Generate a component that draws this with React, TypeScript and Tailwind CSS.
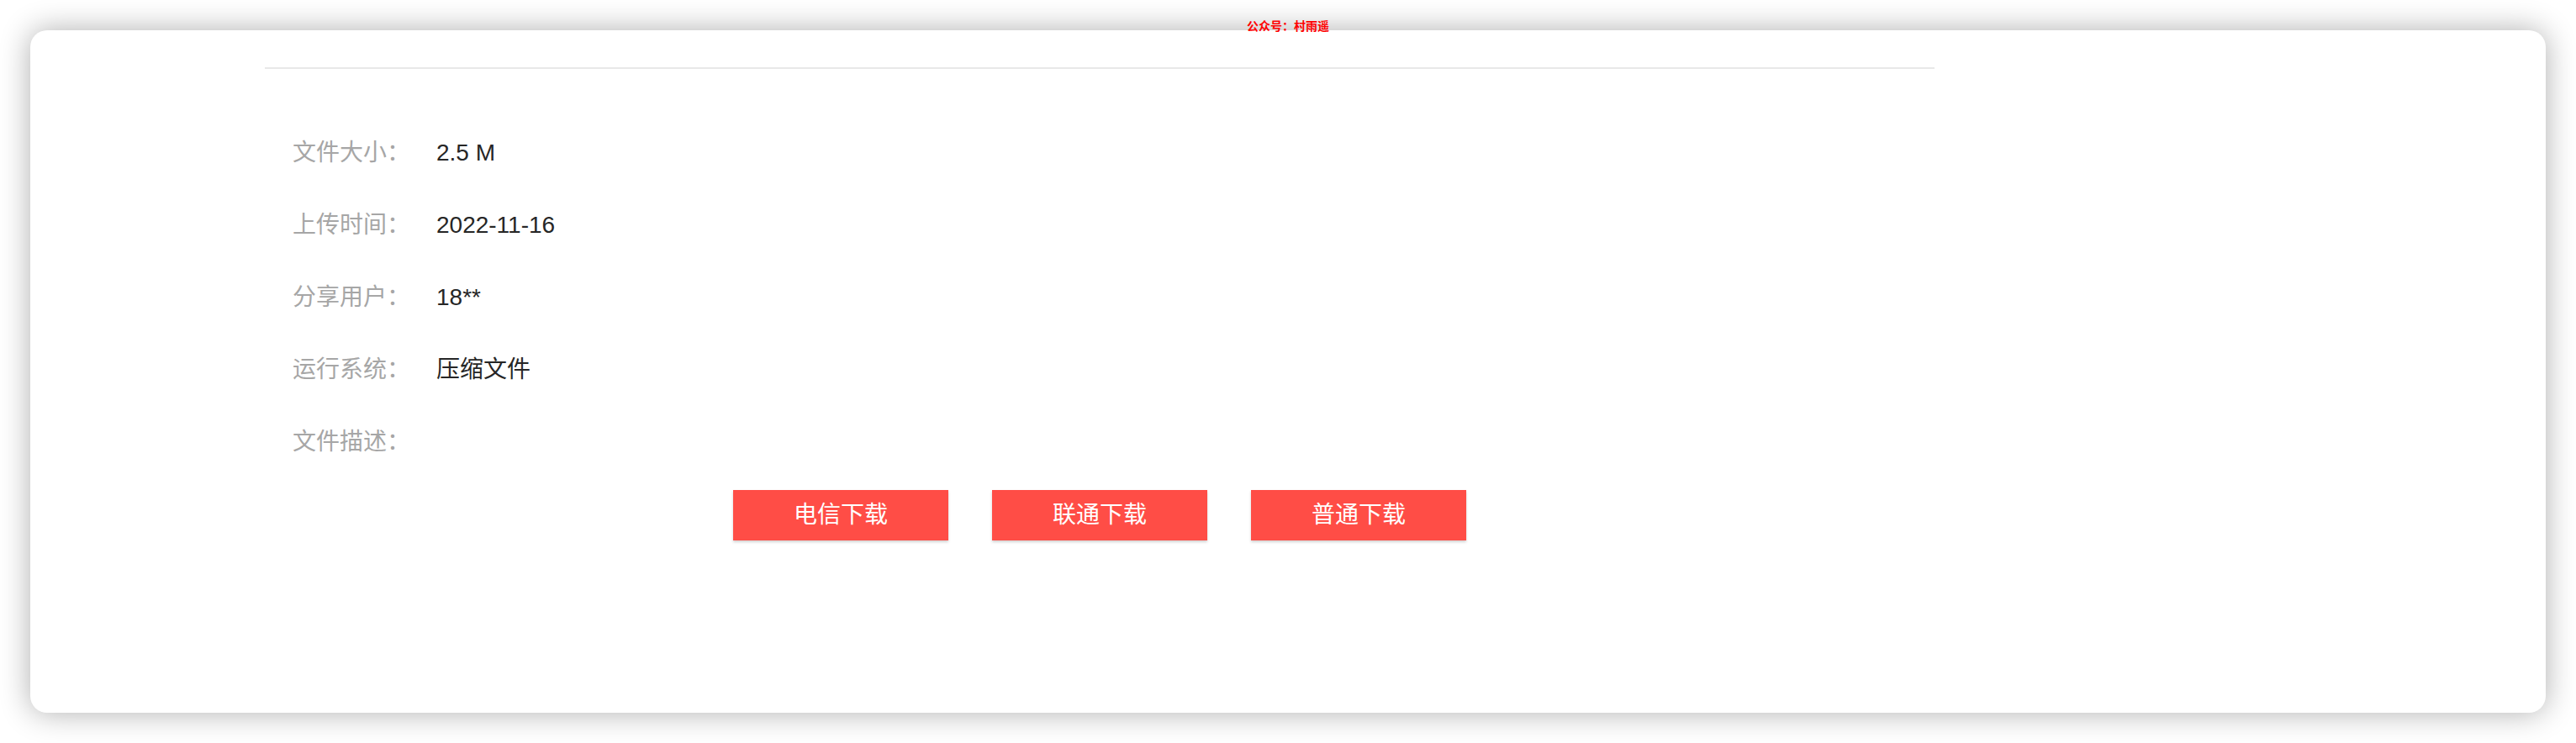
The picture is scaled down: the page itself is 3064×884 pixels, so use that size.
import React from "react";

const rows: [string, string][] = [
  ["文件大小：", "2.5 M"],
  ["上传时间：", "2022-11-16"],
  ["分享用户：", "18**"],
  ["运行系统：", "压缩文件"],
  ["文件描述：", ""],
];

const font = { fontFamily: '"Liberation Sans", "Noto Sans CJK SC", sans-serif' };

export default function App() {
  return (
    <div className="relative w-full h-[884px] bg-white p-[36px]" style={font}>
      <div className="h-[812px] rounded-[20px] bg-white shadow-[0_0_36px_rgba(0,0,0,0.32)]">
        <div className="ml-[279px] w-[1986px]">
          <div className="h-[46px] border-b-2 border-[#e8e8e8]" />
          <div className="pt-[57px] pl-[33px]">
            {rows.map(([k, v]) => (
              <div key={k} className="flex h-[86px] items-center text-[28px] leading-none">
                <div className="w-[171px] text-[#a6a6a6]">{k}</div>
                <div className="text-[#262626]">{v}</div>
              </div>
            ))}
          </div>
          <div className="mt-[14px] flex justify-center gap-[52px]">
            {["电信下载", "联通下载", "普通下载"].map((t) => (
              <div
                key={t}
                className="flex h-[60px] w-[256px] items-center justify-center bg-[#ff4d46] text-[28px] text-white shadow-[0_2px_3px_rgba(0,0,0,0.18)]"
              >
                {t}
              </div>
            ))}
          </div>
        </div>
      </div>
      <div className="absolute left-0 right-0 top-[22px] text-center text-[14px] font-bold leading-[18px] text-[#ff0000]">
        公众号：村雨遥
      </div>
    </div>
  );
}
